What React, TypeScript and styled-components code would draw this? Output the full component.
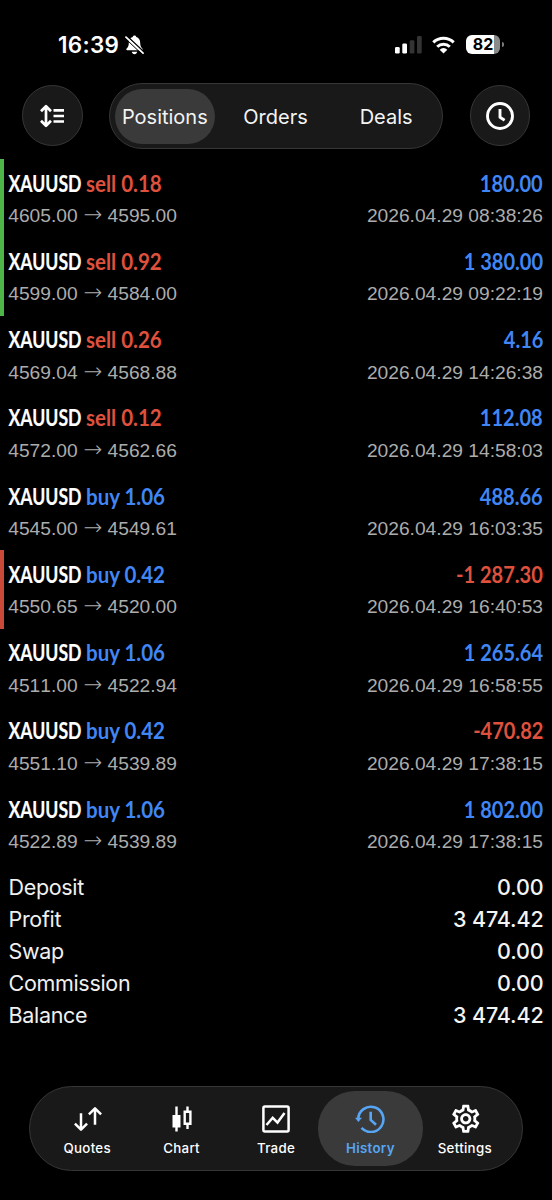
import React from "react";
import styled, { createGlobalStyle, css } from "styled-components";
import { MdOutlineSettings } from "react-icons/md";

const GlobalStyle = createGlobalStyle`
  * { box-sizing: border-box; }
  body {
    margin: 0;
    background: #000;
    color: #fff;
    font-family: Inter, Roboto, sans-serif;
  }
`;

const Screen = styled.div`
  display: flex;
  flex-direction: column;
  width: 552px;
  height: 1200px;
  background: #000;
  overflow: hidden;
`;

const StatusBar = styled.header`
  display: flex;
  justify-content: space-between;
  align-items: center;
  height: 83px;
  padding: 6px 49px 0 58px;
`;

const StatusGroup = styled.div<{ $gap: number }>`
  display: flex;
  align-items: center;
  gap: ${(p) => p.$gap}px;
`;

const Clock = styled.span`
  font-size: 22.5px;
  font-weight: 600;
  line-height: 26px;
  letter-spacing: 0.3px;
`;

const Battery = styled.div`
  display: flex;
  align-items: center;
  gap: 2px;
  margin-left: 1px;
  margin-right: -1px;
  &::after {
    content: "";
    width: 2px;
    height: 5px;
    border-radius: 0 2px 2px 0;
    background: #7d7d7d;
  }
`;

const BatteryLevel = styled.span`
  display: flex;
  align-items: center;
  justify-content: center;
  width: 34px;
  height: 19px;
  border-radius: 6px;
  background: linear-gradient(90deg, #fff 28px, #8a8a8a 28px);
  color: #000;
  font-size: 16px;
  font-weight: 700;
  line-height: 19px;
`;

const Toolbar = styled.div`
  display: flex;
  justify-content: space-between;
  align-items: center;
  height: 66px;
  padding: 0 22px;
`;

const glass = css`
  background: #191919;
  border: 1px solid #363636;
`;

const RoundButton = styled.button`
  ${glass}
  display: flex;
  align-items: center;
  justify-content: center;
  width: 60.5px;
  height: 60.5px;
  margin-top: -1px;
  padding: 0;
  border-radius: 50%;
  color: #fff;
`;

const Segments = styled.div`
  ${glass}
  display: grid;
  grid-template-columns: repeat(3, 1fr);
  width: 334px;
  height: 66px;
  border-radius: 33px;
`;

const Segment = styled.button<{ $active?: boolean }>`
  margin: 5px 5.5px 5px 4.5px;
  padding: 1px 0 0;
  border: 0;
  border-radius: 28px;
  background: ${(p) => (p.$active ? "#3a3a3a" : "transparent")};
  color: #f4f4f4;
  font: 400 20px/54px Inter, sans-serif;
`;

const PositionList = styled.main`
  margin-top: 10px;
`;

const Position = styled.article<{ $mark?: string }>`
  display: flex;
  flex-direction: column;
  gap: 1.5px;
  height: 78.25px;
  padding: 7.5px 9px 0 4.25px;
  border-left: 4px solid ${(p) => p.$mark ?? "transparent"};
`;

const Line = styled.div<{ $height: number }>`
  display: flex;
  justify-content: space-between;
  align-items: center;
  height: ${(p) => p.$height}px;
  white-space: nowrap;
`;

const Title = styled.div`
  display: flex;
  font: 700 23.5px/32px Lato, sans-serif;
`;

const Symbol = styled.span`
  width: 77.5px;
  transform: translateX(0.5px) scaleX(0.75);
  transform-origin: left center;
  -webkit-text-stroke: 0.2px #fff;
`;

const Action = styled.span<{ $tone: string }>`
  color: ${(p) => p.$tone};
  transform: scaleX(0.872);
  transform-origin: left center;
`;

const Profit = styled.span<{ $tone: string }>`
  font: 700 23.5px/32px Lato, sans-serif;
  color: ${(p) => p.$tone};
  transform: scaleX(0.853);
  transform-origin: right center;
`;

const Detail = styled.span`
  font: 400 19.2px/32px "Liberation Sans", Arial, sans-serif;
  font-kerning: none;
  color: #acacac;
`;

const Arrow = styled.span`
  display: inline-block;
  width: 30px;
  text-align: center;
  font: 200 22.5px/20px "DejaVu Sans Light", "DejaVu Sans", sans-serif;
`;

const Summary = styled.dl`
  margin: 7.5px 0 0;
  padding: 0 8.5px 0 8.5px;
`;

const SummaryLabel = styled.dt`
  font-size: 21.5px;
  letter-spacing: -0.32px;
  color: #f0f0f0;
`;

const SummaryValue = styled.dd`
  margin: 0;
  font-size: 21.5px;
  letter-spacing: -0.15px;
  font-weight: 500;
  color: #f4f4f4;
`;

const TabBar = styled.nav`
  ${glass}
  display: grid;
  grid-template-columns: repeat(5, 1fr);
  width: 494px;
  height: 85px;
  margin: auto auto 29px 29px;
  padding: 4px 10px;
  border-radius: 43px;
`;

const Tab = styled.button<{ $active?: boolean }>`
  display: flex;
  flex-direction: column;
  align-items: center;
  height: 75px;
  margin: 0 -5.5px;
  padding: 11px 0 0;
  border: 0;
  border-radius: 37px;
  background: ${(p) => (p.$active ? "#3a3a3a" : "transparent")};
  color: ${(p) => (p.$active ? "#57a6f5" : "#fff")};
  font: ${(p) => (p.$active ? 600 : 500)} 13.3px/18px Inter, sans-serif;
  letter-spacing: 0.3px;
`;

const TabIcon = styled.span`
  display: flex;
  align-items: center;
  justify-content: center;
  height: 34px;
  margin: 0 0 3px 1px;
`;

const BellOff = () => (
  <svg width="19" height="20" viewBox="0 0 19 20">
    <path d="M9.5 .5c1 0 1.700.7 1.800 1.600 2.600.8 3.900 3 3.900 5.700 0 3.300.8 4.400 2.100 5.700.7.7.5 1.700-.5 1.700H2.200c-1 0-1.300-1-.5-1.700C3 12.200 3.800 11.100 3.800 7.800c0-2.700 1.300-4.900 3.900-5.700C7.800 1.200 8.500.5 9.500.5z" fill="#fff" />
    <path d="M6.800 16.800h5.400c-.3 1.500-1.300 2.400-2.700 2.400s-2.400-.9-2.700-2.400z" fill="#fff" />
    <path d="M2.200 1.200 19 17" stroke="#000" strokeWidth="1.500" />
    <path d="M1 2.200 18 18.200" stroke="#fff" strokeWidth="1.800" strokeLinecap="round" />
    <path d="M0 3.200 17 19.200" stroke="#000" strokeWidth="1" />
  </svg>
);

const Signal = () => (
  <svg width="27" height="18" viewBox="0 0 27 18">
    <rect x="0" y="11" width="4.700" height="6.600" rx="1.300" fill="#fff" />
    <rect x="7.300" y="7.400" width="4.700" height="10.200" rx="1.300" fill="#fff" />
    <rect x="14.700" y="4.200" width="4.700" height="13.400" rx="1.300" fill="#343434" />
    <rect x="22" y="0" width="4.700" height="17.600" rx="1.300" fill="#343434" />
  </svg>
);

const Wifi = () => (
  <svg width="23" height="18" viewBox="0 0 23 18" fill="none" stroke="#fff" strokeWidth="3">
    <path d="M1.300 6.400a14.500 14.500 0 0 1 20.400 0" />
    <path d="M5.200 10.700a9 9 0 0 1 12.600 0" />
    <path d="M11.500 17.500 7.700 13.700a5.300 5.300 0 0 1 7.600 0z" fill="#fff" stroke="none" />
  </svg>
);

const SortIcon = () => (
  <svg width="26" height="24" viewBox="0 0 26 24" fill="none" stroke="currentColor" strokeWidth="2.700">
    <path d="M7 3v18M2 7.300l5-5 5 5M2 16.700l5 5 5-5" strokeLinejoin="round" />
    <path d="M14.500 6.300H25M14.500 12H25M14.500 17.500H25" />
  </svg>
);

const ClockIcon = () => (
  <svg width="28" height="28" viewBox="0 0 28 28" fill="none" stroke="currentColor" strokeWidth="2.900">
    <circle cx="14" cy="14" r="12.500" />
    <path d="M14 7v8.200l4.600 3" strokeLinejoin="round" />
  </svg>
);

const QuotesIcon = () => (
  <svg width="28" height="28" viewBox="0 0 28 28" fill="none" stroke="currentColor" strokeWidth="2.500">
    <path d="M7 8.300v16M.9 18.600 7 24.700l6.100-6.100M21 19.700v-16M14.900 9.400 21 3.300l6.100 6.100" strokeLinejoin="round" />
  </svg>
);

const ChartIcon = () => (
  <svg width="20" height="26" viewBox="0 0 20 26" fill="none" stroke="currentColor" strokeWidth="2.400">
    <path d="M4.500 .5v25M15.500 .5v5M15.500 18v5" />
    <path d="M.5 9h8v12.500h-8z" fill="currentColor" stroke="none" />
    <path d="M12.700 5.700h5.700v12h-5.700z" />
  </svg>
);

const TradeIcon = () => (
  <svg width="28" height="28" viewBox="0 0 28 28" fill="none" stroke="currentColor" strokeWidth="2.500">
    <rect x="1.400" y="1.400" width="25.200" height="25.200" rx="1.500" />
    <path d="m4.500 20 6.200-7.200 4.800 4.800L22.500 8" />
  </svg>
);

const HistoryIcon = () => (
  <svg width="31" height="28" viewBox="0 0 31 28" fill="none" stroke="currentColor" strokeWidth="2.600">
    <path d="M3.200 14a12.600 12.600 0 1 1 3.300 8.900" />
    <path d="M0 12.800h7L3.400 17z" fill="currentColor" stroke="none" />
    <path d="M15.700 6.700v8.200l5.300 4.800" />
  </svg>
);

const RED = "#df513d";
const BLUE = "#4186f5";

type Trade = [side: "sell" | "buy", volume: string, open: string, close: string, profit: string, time: string, mark?: string];

const trades: Trade[] = [
  ["sell", "0.18", "4605.00", "4595.00", "180.00", "2026.04.29 08:38:26", "#4eb548"],
  ["sell", "0.92", "4599.00", "4584.00", "1 380.00", "2026.04.29 09:22:19", "#4eb548"],
  ["sell", "0.26", "4569.04", "4568.88", "4.16", "2026.04.29 14:26:38"],
  ["sell", "0.12", "4572.00", "4562.66", "112.08", "2026.04.29 14:58:03"],
  ["buy", "1.06", "4545.00", "4549.61", "488.66", "2026.04.29 16:03:35"],
  ["buy", "0.42", "4550.65", "4520.00", "-1 287.30", "2026.04.29 16:40:53", "#ca4a39"],
  ["buy", "1.06", "4511.00", "4522.94", "1 265.64", "2026.04.29 16:58:55"],
  ["buy", "0.42", "4551.10", "4539.89", "-470.82", "2026.04.29 17:38:15"],
  ["buy", "1.06", "4522.89", "4539.89", "1 802.00", "2026.04.29 17:38:15"],
];

const totals = [
  ["Deposit", "0.00"],
  ["Profit", "3 474.42"],
  ["Swap", "0.00"],
  ["Commission", "0.00"],
  ["Balance", "3 474.42"],
];

const tabs = [
  { label: "Quotes", icon: <QuotesIcon /> },
  { label: "Chart", icon: <ChartIcon /> },
  { label: "Trade", icon: <TradeIcon /> },
  { label: "History", icon: <HistoryIcon />, active: true },
  { label: "Settings", icon: <MdOutlineSettings size={33.5} /> },
];

export default function App() {
  return (
    <Screen>
      <GlobalStyle />
      <StatusBar>
        <StatusGroup $gap={6}>
          <Clock>16:39</Clock>
          <BellOff />
        </StatusGroup>
        <StatusGroup $gap={10}>
          <Signal />
          <Wifi />
          <Battery>
            <BatteryLevel>82</BatteryLevel>
          </Battery>
        </StatusGroup>
      </StatusBar>
      <Toolbar>
        <RoundButton aria-label="Sort"><SortIcon /></RoundButton>
        <Segments>
          <Segment $active>Positions</Segment>
          <Segment>Orders</Segment>
          <Segment>Deals</Segment>
        </Segments>
        <RoundButton aria-label="Period"><ClockIcon /></RoundButton>
      </Toolbar>
      <PositionList>
        {trades.map(([side, volume, open, close, profit, time, mark], i) => (
          <Position key={i} $mark={mark}>
            <Line $height={32}>
              <Title>
                <Symbol>XAUUSD</Symbol>
                <Action $tone={side === "sell" ? RED : BLUE}>{side} {volume}</Action>
              </Title>
              <Profit $tone={profit.startsWith("-") ? RED : BLUE}>{profit}</Profit>
            </Line>
            <Line $height={32}>
              <Detail>{open}<Arrow>→</Arrow>{close}</Detail>
              <Detail>{time}</Detail>
            </Line>
          </Position>
        ))}
      </PositionList>
      <Summary>
        {totals.map(([label, value]) => (
          <Line key={label} $height={32}>
            <SummaryLabel>{label}</SummaryLabel>
            <SummaryValue>{value}</SummaryValue>
          </Line>
        ))}
      </Summary>
      <TabBar>
        {tabs.map(({ label, icon, active }) => (
          <Tab key={label} $active={active}>
            <TabIcon>{icon}</TabIcon>
            {label}
          </Tab>
        ))}
      </TabBar>
    </Screen>
  );
}
